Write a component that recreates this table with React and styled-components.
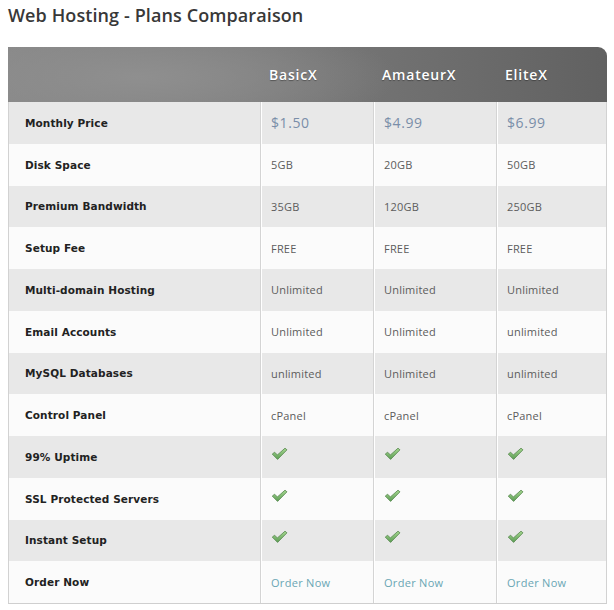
import React from "react";
import styled, { createGlobalStyle } from "styled-components";

const plans = ["BasicX", "AmateurX", "EliteX"];

const rows = [
  { label: "Monthly Price", values: ["$1.50", "$4.99", "$6.99"], kind: "price" },
  { label: "Disk Space", values: ["5GB", "20GB", "50GB"] },
  { label: "Premium Bandwidth", values: ["35GB", "120GB", "250GB"] },
  { label: "Setup Fee", values: ["FREE", "FREE", "FREE"] },
  { label: "Multi-domain Hosting", values: ["Unlimited", "Unlimited", "Unlimited"] },
  { label: "Email Accounts", values: ["Unlimited", "Unlimited", "unlimited"] },
  { label: "MySQL Databases", values: ["unlimited", "Unlimited", "unlimited"] },
  { label: "Control Panel", values: ["cPanel", "cPanel", "cPanel"] },
  { label: "99% Uptime", values: [true, true, true], kind: "check" },
  { label: "SSL Protected Servers", values: [true, true, true], kind: "check" },
  { label: "Instant Setup", values: [true, true, true], kind: "check" },
  { label: "Order Now", values: ["Order Now", "Order Now", "Order Now"], kind: "link" },
];

function Check() {
  return (
    <svg width="17" height="14" viewBox="0 0 16 13">
      <defs>
        <linearGradient id="chk" x1="0" y1="0" x2="0" y2="1">
          <stop offset="0" stopColor="#a6d88f" />
          <stop offset="1" stopColor="#5c9d55" />
        </linearGradient>
      </defs>
      <path
        d="M1.2 6.6 L3.4 4.8 L6 7.4 L13.2 1 L15 2.6 L6.2 11.6 Z"
        fill="url(#chk)"
        stroke="#5a8a52"
        strokeWidth="0.8"
        strokeLinejoin="round"
      />
    </svg>
  );
}

export default function App() {
  return (
    <>
      <GlobalStyle />
      <Page>
        <Title>Web Hosting - Plans Comparaison</Title>
        <Table>
          <HeadRow>
            <HeadCell />
            {plans.map((p) => (
              <HeadCell key={p}>{p}</HeadCell>
            ))}
          </HeadRow>
          {rows.map((row, i) => (
            <Row key={row.label} $shaded={i % 2 === 0}>
              <Label>{row.label}</Label>
              {row.values.map((v, j) => (
                <Cell key={j}>
                  {row.kind === "check" ? (
                    <Check />
                  ) : row.kind === "price" ? (
                    <Price>{v}</Price>
                  ) : row.kind === "link" ? (
                    <OrderLink href="#">{v}</OrderLink>
                  ) : (
                    v
                  )}
                </Cell>
              ))}
            </Row>
          ))}
        </Table>
      </Page>
    </>
  );
}

const GlobalStyle = createGlobalStyle`
  html, body {
    margin: 0;
    background: #ffffff;
  }
  body {
    font-family: "Open Sans", "Liberation Sans", sans-serif;
  }
`;

const Page = styled.div`
  width: 614px;
  padding: 0 7px 0 8px;
  box-sizing: border-box;
`;

const Title = styled.h1`
  margin: 0;
  height: 47px;
  padding-top: 2px;
  box-sizing: border-box;
  font-family: "Open Sans", "Liberation Sans", sans-serif;
  font-size: 18px;
  font-weight: 600;
  line-height: 26px;
  color: #383838;
  letter-spacing: 0.1px;
`;

const Table = styled.div`
  width: 599px;
  border-bottom: 1px solid #cfcfcf;
  display: flex;
  flex-direction: column;
`;

const columns = "251px 113px 123px 112px";

const HeadRow = styled.div`
  display: grid;
  grid-template-columns: ${columns};
  height: 55px;
  border-top-right-radius: 9px;
  background: radial-gradient(ellipse 260px 60px at 130px 30px, #8f8f8f 0%, rgba(143, 143, 143, 0) 100%),
    linear-gradient(to right, #888888 0%, #7c7c7c 40%, #616161 100%);
`;

const HeadCell = styled.div`
  display: flex;
  align-items: center;
  padding: 0 0 0 10px;
  font-family: "Open Sans", "Liberation Sans", sans-serif;
  font-size: 14px;
  font-weight: 600;
  letter-spacing: 0.8px;
  color: #ffffff;
  text-shadow: 0 1px 1px rgba(0, 0, 0, 0.35);
`;

const Row = styled.div`
  display: grid;
  grid-template-columns: ${columns};
  height: 41.75px;
  background: ${(p) => (p.$shaded ? "#e8e8e8" : "#fbfbfb")};
  border-left: 1px solid #d2d2d2;
  border-right: 1px solid #d2d2d2;
  box-sizing: border-box;
`;

const Label = styled.div`
  display: flex;
  align-items: center;
  padding-left: 16px;
  font-family: "DejaVu Sans", "Liberation Sans", sans-serif;
  font-size: 10.5px;
  font-weight: 700;
  letter-spacing: 0.1px;
  color: #222222;
`;

const Cell = styled.div`
  display: flex;
  align-items: center;
  padding-left: 10px;
  border-left: 1px solid #d4d4d4;
  box-shadow: inset 1px 0 0 #ffffff;
  font-family: "Open Sans", "Liberation Sans", sans-serif;
  font-size: 11px;
  letter-spacing: 0.2px;
  color: #5c5c5c;

  svg {
    margin-top: -6px;
  }
`;

const Price = styled.span`
  font-size: 14px;
  letter-spacing: 0.6px;
  color: #7a8ea8;
`;

const OrderLink = styled.a`
  color: #6aa6b4;
  text-decoration: none;
  letter-spacing: 0.3px;
`;
